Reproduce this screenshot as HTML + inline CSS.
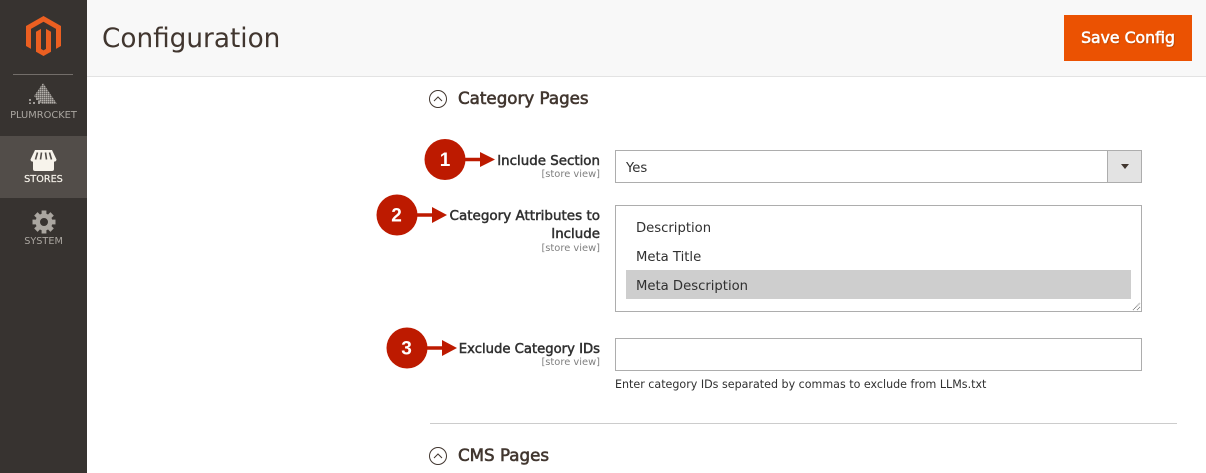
<!DOCTYPE html>
<html><head><meta charset="utf-8">
<style>
html,body{margin:0;padding:0;background:#fff}
#p{position:relative;width:1206px;height:473px;overflow:hidden;background:#fff;font-family:"DejaVu Sans",sans-serif;color:#303030}
#p div{position:absolute;white-space:nowrap}
.b{border:1px solid #adadad;box-sizing:border-box;background:#fff}
.l{font-size:13.4px;line-height:20px;color:#303030;text-align:right;right:606px;-webkit-text-stroke:.5px #303030}
.s{font-size:9.9px;line-height:12px;color:#808080;text-align:right;right:606px}
.n{font-size:13.2px;line-height:20px;color:#303030}
.h{font-size:16.7px;line-height:22px;color:#41362f;-webkit-text-stroke:.6px #41362f}
.m{font-size:9.85px;line-height:12px;color:#aaa6a0;width:87px;text-align:center;left:0}
</style></head><body><div id="p">
<div style="left:0;top:0;width:87px;height:473px;background:#373330"></div>
<div style="left:0;top:136px;width:87px;height:62px;background:#524d49"></div>
<div style="left:13px;top:74px;width:60px;height:1px;background:#736e6a"></div>
<svg style="position:absolute;left:26px;top:16px" width="35" height="40" viewBox="1.609 0 20.782 24" preserveAspectRatio="none">
<path fill="#eb5f21" d="M12 24l-4.455-2.572v-12l2.97-1.715v12.001l1.485.902 1.485-.902V7.713l2.971 1.715v12L12 24zM22.391 6v12l-2.969 1.714V7.713L12 3.43 4.574 7.713v12L1.609 18V6L12 0l10.391 6z"/>
</svg>
<svg style="position:absolute;left:28px;top:82px" width="30" height="24" viewBox="0 0 30 24">
<defs><pattern id="d" width="2" height="2" patternUnits="userSpaceOnUse"><rect width="1.6" height="1.6" fill="#b4b0ab"/></pattern></defs>
<path fill="url(#d)" d="M15 1 29 22H14L6 14z"/>
<path fill="#a09c98" d="M1 17h2v2H1zM1 20.500h2v1.500H1zM5 20h2v2H5zM8 16h2v2H8zM10 19h2v3h-2z"/>
</svg>
<div class="m" style="top:110px">PLUMROCKET</div>
<svg style="position:absolute;left:30px;top:149px" width="27" height="23" viewBox="0 0 27 23">
<path fill="#f7f3eb" d="M5 1h17l4.500 9.500c0 1.500-1.500 2.500-2.500 2V20a2 2 0 0 1-2 2H5a2 2 0 0 1-2-2v-7.500c-1 .5-2.500-.5-2.500-2z"/>
<path stroke="#524d49" stroke-width="1.6" fill="none" d="M7.500 3.500 5.500 10.500M11.500 3.500 10.500 10.500M15.500 3.500 16.500 10.500M19.500 3.500 21.500 10.500"/>
</svg>
<div class="m" style="top:174px;color:#f7f3eb;-webkit-text-stroke:.2px #f7f3eb;font-size:9.7px">STORES</div>
<svg style="position:absolute;left:32px;top:210px" width="24" height="24" viewBox="-12 -12 24 24" fill="#aaa6a0">
<circle r="6.250" fill="none" stroke="#aaa6a0" stroke-width="4.500"/>
<g><rect x="-2.400" y="-11.500" width="4.800" height="4"/><rect x="-2.400" y="7.500" width="4.800" height="4"/></g>
<g transform="rotate(45)"><rect x="-2.400" y="-11.500" width="4.800" height="4"/><rect x="-2.400" y="7.500" width="4.800" height="4"/></g>
<g transform="rotate(90)"><rect x="-2.400" y="-11.500" width="4.800" height="4"/><rect x="-2.400" y="7.500" width="4.800" height="4"/></g>
<g transform="rotate(135)"><rect x="-2.400" y="-11.500" width="4.800" height="4"/><rect x="-2.400" y="7.500" width="4.800" height="4"/></g>
</svg>
<div class="m" style="top:236px;font-size:9.7px">SYSTEM</div>
<div style="left:87px;top:0;width:1119px;height:76px;background:#f8f8f8"></div>
<div style="left:87px;top:76px;width:1119px;height:1px;background:#e3e3e3"></div>
<div style="left:102px;top:20px;font-size:26.3px;line-height:38px;color:#41362f">Configuration</div>
<div style="left:1064px;top:15px;width:128px;height:46px;background:#eb5202;color:#fff;font-size:15.7px;line-height:46px;text-align:center;-webkit-text-stroke:.6px #fff;text-shadow:1px 1px 1px rgba(120,50,0,.5)">Save Config</div>
<svg style="position:absolute;left:429px;top:90px" width="19" height="19" viewBox="0 0 19 19"><circle cx="9" cy="9" r="8.500" fill="none" stroke="#41362f"/><path d="M5 11l4-4 4 4" fill="none" stroke="#41362f"/></svg>
<div class="h" style="left:458px;top:87px">Category Pages</div>
<svg style="position:absolute;left:429px;top:447px" width="19" height="19" viewBox="0 0 19 19"><circle cx="9" cy="9" r="8.500" fill="none" stroke="#41362f"/><path d="M5 11l4-4 4 4" fill="none" stroke="#41362f"/></svg>
<div class="h" style="left:458px;top:444px">CMS Pages</div>
<div class="l" style="top:152px">Include Section</div>
<div class="s" style="top:169px">[store view]</div>
<div class="l" style="top:206px;font-size:13.5px">Category Attributes to</div>
<div class="l" style="top:225px">Include</div>
<div class="s" style="top:243px">[store view]</div>
<div class="l" style="top:340px;font-size:13.2px">Exclude Category IDs</div>
<div class="s" style="top:357px">[store view]</div>
<div class="b" style="left:615px;top:150px;width:527px;height:33px"></div>
<div style="left:1107px;top:150px;width:35px;height:33px;box-sizing:border-box;border:1px solid #adadad;background:#e3e3e3"></div>
<div style="left:1121px;top:164px;width:0;height:0;border:4px solid transparent;border-top:5px solid #41362f;border-bottom:0"></div>
<div class="n" style="left:626px;top:159px">Yes</div>
<div class="b" style="left:615px;top:205px;width:527px;height:107px"></div>
<div style="left:626px;top:270px;width:505px;height:29px;background:#cecece"></div>
<div class="n" style="left:636px;top:219px">Description</div>
<div class="n" style="left:636px;top:248px">Meta Title</div>
<div class="n" style="left:636px;top:277px">Meta Description</div>
<svg style="position:absolute;left:1132px;top:302px" width="9" height="9"><path d="M1 8 8 1M5 8l3-3" stroke="#777" stroke-dasharray="1 .6" fill="none"/></svg>
<div class="b" style="left:615px;top:338px;width:527px;height:33px"></div>
<div style="left:615px;top:378px;font-size:11.1px;line-height:14px;color:#303030">Enter category IDs separated by commas to exclude from LLMs.txt</div>
<div style="left:430px;top:423px;width:747px;height:1px;background:#cccccc"></div>
<svg style="position:absolute;left:370px;top:130px" width="140" height="240" viewBox="0 0 140 240" font-family="Liberation Sans,sans-serif">
<g fill="#bd1a00">
<circle cx="75" cy="29.500" r="20.500"/><path d="M90 27.700h20v3.600H90z"/><path d="M110 22l15 7.500-15 7.500z"/>
<circle cx="27" cy="85" r="20.500"/><path d="M42 83.200h20v3.600H42z"/><path d="M62 77l15 8-15 8z"/>
<circle cx="37" cy="218" r="20.500"/><path d="M52 216.200h20v3.600H52z"/><path d="M72 210l15 8-15 8z"/>
</g>
<g fill="#fff" font-weight="bold" font-size="19" text-anchor="middle">
<text x="75" y="36">1</text><text x="26.500" y="91.500">2</text><text x="36.500" y="224.500">3</text>
</g>
</svg>
</div></body></html>
